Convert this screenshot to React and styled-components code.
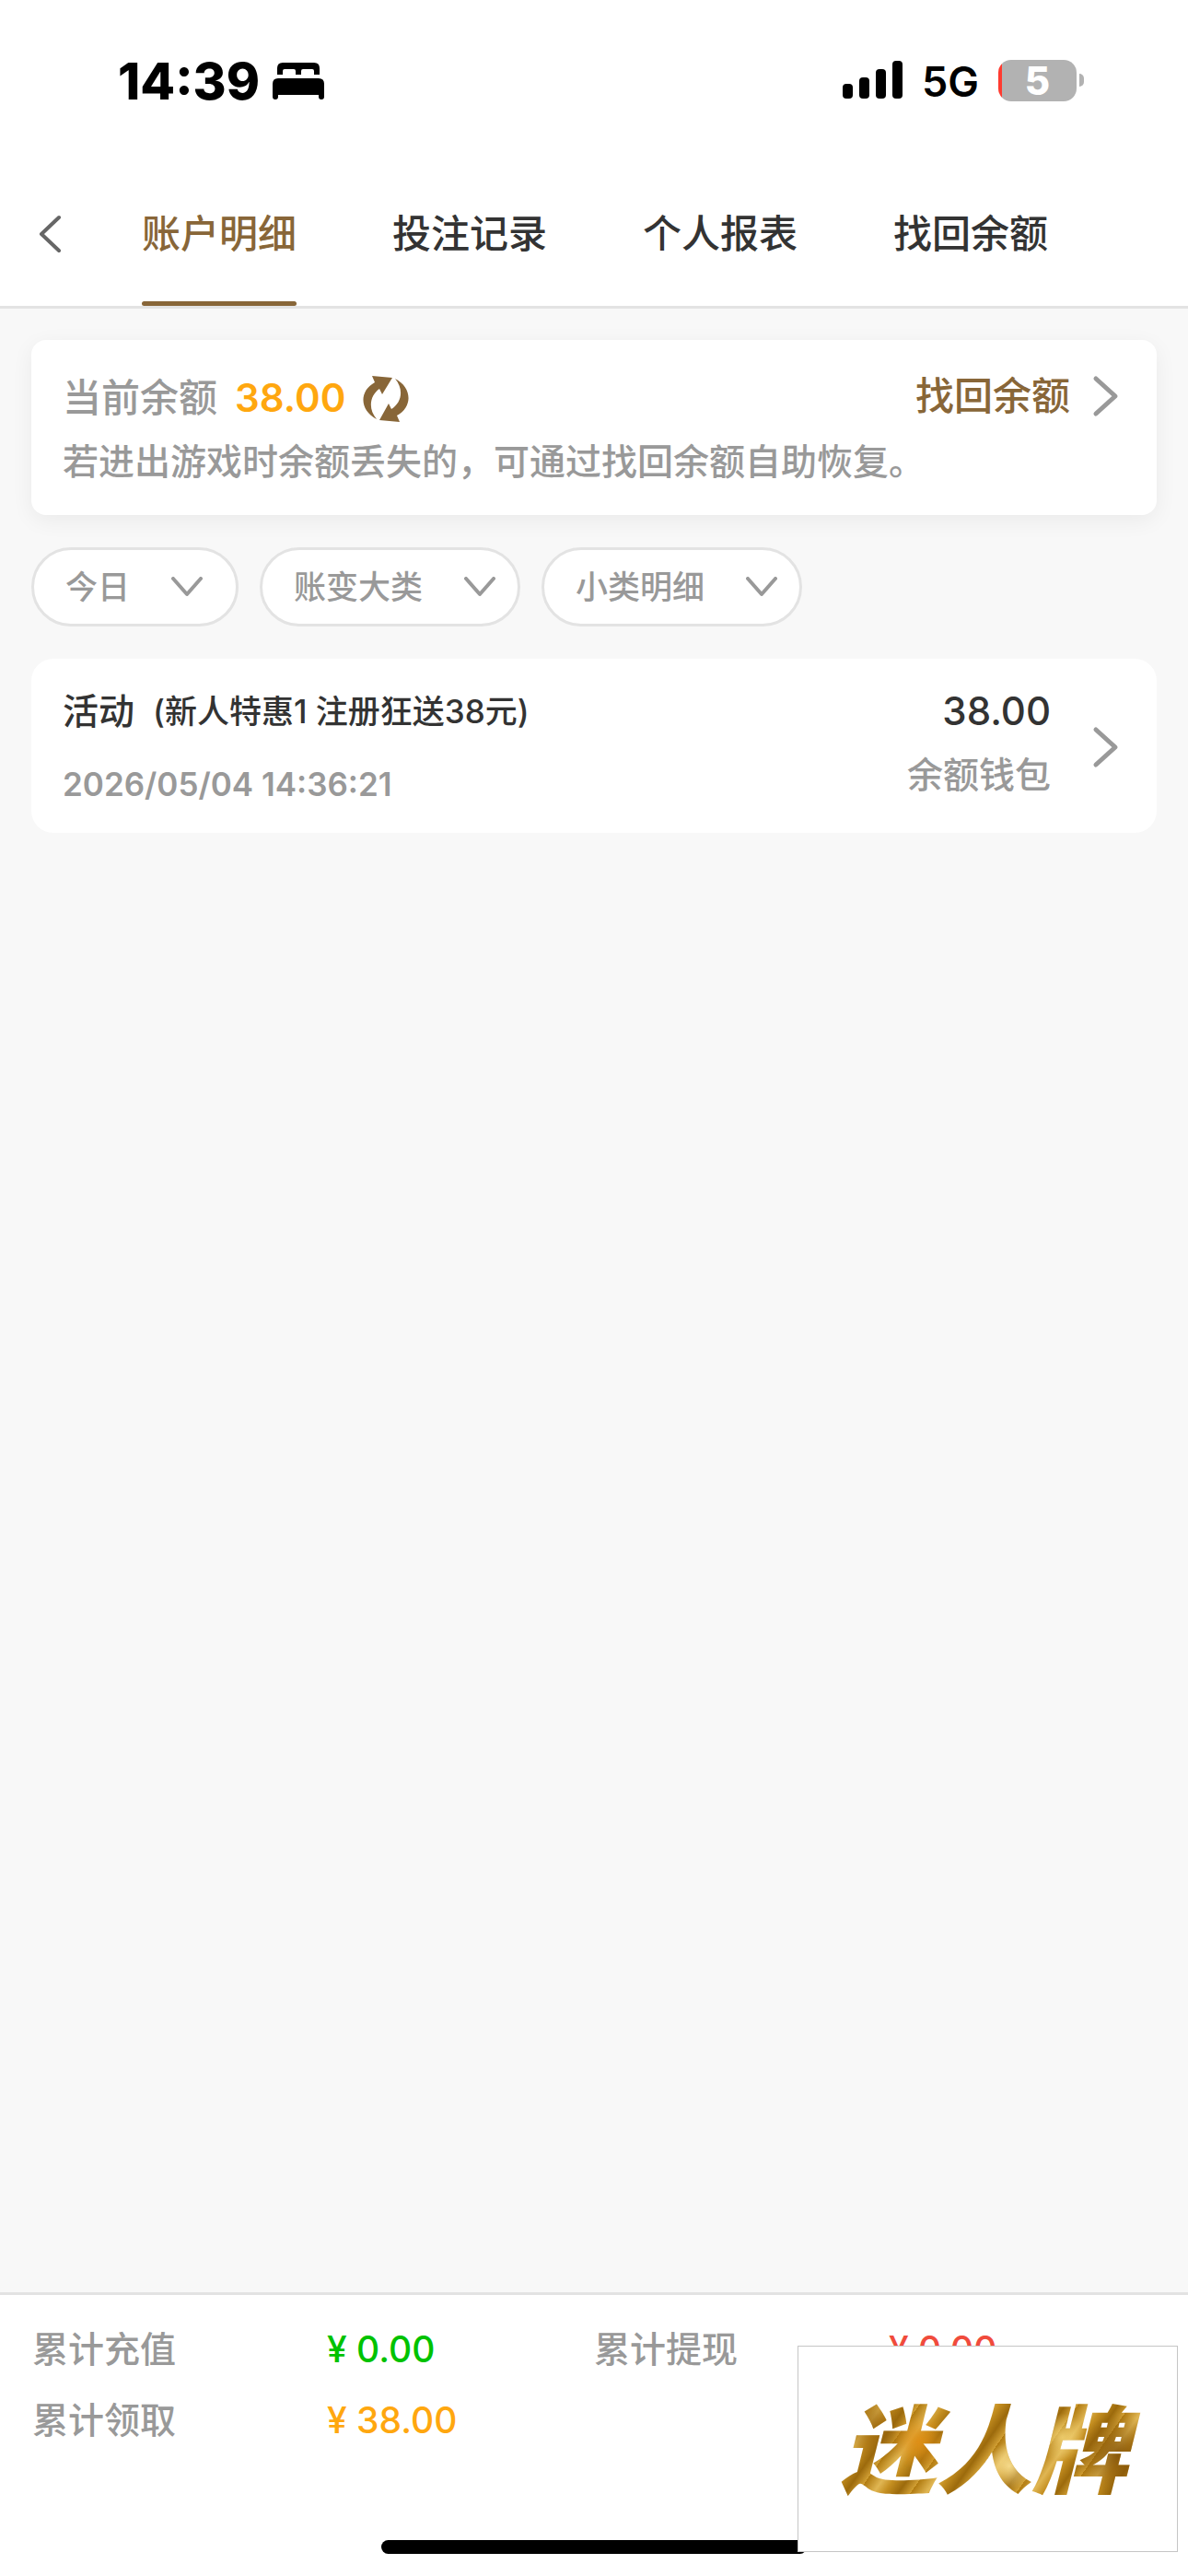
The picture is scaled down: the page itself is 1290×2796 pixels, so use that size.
import React from 'react'
import styled, { createGlobalStyle } from 'styled-components';

const tabs = ['账户明细', '投注记录', '个人报表', '找回余额'];

const totals = [
    { label: '累计充值', value: '¥ 0.00', color: '#00c200' },
    { label: '累计提现', value: '¥ 0.00', color: '#f04b3c' },
    { label: '累计领取', value: '¥ 38.00', color: '#ffa70f' },
];

const ArrowRight = () => (
    <ArrowSvg viewBox="0 0 40 48" aria-hidden="true">
        <path d="M10 5 L31 24 L10 43" />
    </ArrowSvg>
);

const Dropdown = ({ label, wide }) => (
    <Pill $wide={wide}>
        <Select aria-label={label} defaultValue={label}>
            <option>{label}</option>
        </Select>
        <PillArrow viewBox="0 0 34 22" aria-hidden="true">
            <path d="M2 2 L17 19 L32 2" />
        </PillArrow>
    </Pill>
);

export default function App() {
    return (
        <>
        <GlobalStyle />
        <Page>
            <StatusBar>
                <Clock>14:39</Clock>
                <Bed viewBox="0 0 56 40" aria-hidden="true">
                    <path d="M5 13V6Q5 0 11 0H45Q51 0 51 6V13H45V9Q45 7 43 7H33Q31 7 31 9V13H25V9Q25 7 23 7H13Q11 7 11 9V13Z" />
                    <path d="M0 23Q0 17 6 17H50Q56 17 56 23V37Q56 40 53 40T50 37V35H6V37Q6 40 3 40T0 37Z" />
                </Bed>
                <Spacer />
                <Signal viewBox="0 0 65 41" aria-hidden="true">
                    <rect x="0" y="25" width="11" height="16" rx="4" />
                    <rect x="18" y="18" width="11" height="23" rx="4" />
                    <rect x="36" y="9" width="11" height="32" rx="4" />
                    <rect x="54" y="0" width="11" height="41" rx="4" />
                </Signal>
                <Network>5G</Network>
                <Battery>
                    <BatteryBody>5</BatteryBody>
                    <BatteryCap />
                </Battery>
            </StatusBar>
            <Nav>
                <Back type="button" aria-label="返回">
                    <svg viewBox="0 0 28 44" width="28" height="44">
                        <path d="M24 4 L5 22 L24 40" />
                    </svg>
                </Back>
                <Tabs>
                    {tabs.map((tab, i) => (
                        <Tab key={tab} href="#" $active={i === 0}>
                            <span>{tab}</span>
                        </Tab>
                    ))}
                </Tabs>
            </Nav>
            <Main>
                <BalanceCard>
                    <BalanceRow>
                        <BalanceLabel>当前余额</BalanceLabel>
                        <Balance>38.00</Balance>
                        <Refresh type="button" aria-label="刷新">
                            <svg viewBox="0 0 50 52" width="50" height="52">
                                <path d="M10 1 L32 3 L21 21 L18 15 C8 22 5 36 15 48 C-3 39 -5 18 13 8 Z" />
                                <path d="M40 51 L18 49 L28 31 L31 37 C42 30 45 16 35 4 C53 13 55 34 37 44 Z" />
                            </svg>
                        </Refresh>
                        <Spacer />
                        <Recover href="#">
                            找回余额
                            <ArrowRight />
                        </Recover>
                    </BalanceRow>
                    <Hint>若进出游戏时余额丢失的，可通过找回余额自助恢复。</Hint>
                </BalanceCard>
                <Filters>
                    <Dropdown label="今日" wide />
                    <Dropdown label="账变大类" />
                    <Dropdown label="小类明细" />
                </Filters>
                <Record href="#">
                    <RecordInfo>
                        <RecordTitle>
                            活动
                            <small>(新人特惠1 注册狂送38元)</small>
                        </RecordTitle>
                        <RecordTime>2026/05/04 14:36:21</RecordTime>
                    </RecordInfo>
                    <RecordSum>
                        <RecordAmount>38.00</RecordAmount>
                        <RecordWallet>余额钱包</RecordWallet>
                    </RecordSum>
                    <ArrowRight />
                </Record>
            </Main>
            <Footer>
                <Totals>
                    {totals.map((item) => (
                        <Total key={item.label}>
                            <dt>{item.label}</dt>
                            <TotalValue $color={item.color}>{item.value}</TotalValue>
                        </Total>
                    ))}
                </Totals>
                <HomeIndicator />
                <Brand>
                    <BrandName>迷人牌</BrandName>
                </Brand>
            </Footer>
        </Page>
        </>
    );
};

const GlobalStyle = createGlobalStyle `
    * {
        box-sizing: border-box;
    }
    body {
        margin: 0;
        background: #f8f8f8;
        font-family: Inter, 'Noto Sans CJK SC', sans-serif;
        font-weight: 500;
    }
    a {
        color: inherit;
        text-decoration: none;
    }
    button, select {
        font: inherit;
        color: inherit;
        border: 0;
        padding: 0;
        background: none;
    }
`;
const Page = styled.div `
    display: flex;
    flex-direction: column;
    min-height: 100vh;
`;
const Spacer = styled.div `
    flex: 1;
`;
const StatusBar = styled.div `
    display: flex;
    align-items: center;
    height: 174px;
    padding: 2px 113px 0 128px;
    background: #fff;
    color: #000;
`;
const Clock = styled.span `
    font-size: 55px;
    font-weight: 800;
`;
const Bed = styled.svg `
    width: 56px;
    height: 40px;
    margin-left: 14px;
`;
const Signal = styled.svg `
    width: 65px;
    height: 41px;
    margin-bottom: 4px;
`;
const Network = styled.span `
    margin: 0 21px;
    font-size: 45px;
    font-weight: 600;
`;
const Battery = styled.div `
    display: flex;
    align-items: center;
    gap: 3px;
    margin-bottom: 2px;
`;
const BatteryBody = styled.div `
    width: 85px;
    height: 45px;
    border-radius: 14px;
    background: linear-gradient(to right, #ff3b30 4px, #b2b2b2 4px);
    color: #fff;
    font-size: 42px;
    font-weight: 800;
    line-height: 45px;
    text-align: center;
`;
const BatteryCap = styled.div `
    width: 5px;
    height: 14px;
    border-radius: 0 5px 5px 0;
    background: #b2b2b2;
`;
const Nav = styled.nav `
    display: flex;
    height: 161px;
    background: #fff;
    border-bottom: 3px solid #e3e3e3;
`;
const Back = styled.button `
    display: flex;
    align-items: center;
    width: 154px;
    padding: 2px 0 0 40px;
    svg {
        fill: none;
        stroke: #666;
        stroke-width: 4;
        stroke-linecap: round;
        stroke-linejoin: round;
    }
`;
const Tabs = styled.div `
    display: flex;
    gap: 104px;
`;
const Tab = styled.a `
    display: flex;
    flex-direction: column;
    font-size: 42px;
    color: ${(props) => (props.$active ? '#886638' : '#333')};
    span {
        display: flex;
        align-items: center;
        flex: 1;
    }
    &::after {
        content: '';
        height: 5px;
        border-radius: 3px;
        background: ${(props) => (props.$active ? '#886638' : 'transparent')};
    }
`;
const Main = styled.main `
    display: flex;
    flex-direction: column;
    gap: 35px;
    flex: 1;
    padding: 34px;
`;
const BalanceCard = styled.section `
    padding: 28px 36px 23px 34px;
    border-radius: 16px;
    background: #fff;
    box-shadow: 0 6px 24px rgba(0, 0, 0, 0.06);
    color: #999;
`;
const BalanceRow = styled.div `
    display: flex;
    align-items: center;
    height: 69px;
    font-size: 42px;
    line-height: 68px;
`;
const BalanceLabel = styled.span `
    margin-right: 19px;
`;
const Balance = styled.span `
    color: #ffa70f;
    font-weight: 600;
`;
const Refresh = styled.button `
    display: flex;
    margin: 2px 0 0 19px;
    fill: #886638;
`;
const Recover = styled.a `
    display: flex;
    align-items: center;
    gap: 18px;
    height: 66px;
    margin-bottom: 4px;
    color: #886638;
`;
const ArrowSvg = styled.svg `
    width: 40px;
    height: 48px;
    fill: none;
    stroke: #999;
    stroke-width: 5;
    stroke-linecap: round;
    stroke-linejoin: round;
`;
const Hint = styled.p `
    margin: 0;
    font-size: 39px;
    line-height: 70px;
`;
const Filters = styled.div `
    display: flex;
    gap: 23px;
`;
const Pill = styled.div `
    display: flex;
    align-items: center;
    gap: 44px;
    height: 86px;
    padding: 0 ${(props) => (props.$wide ? 36 : 24)}px 0 34px;
    border: 3px solid #e3e3e3;
    border-radius: 43px;
    background: #fff;
    color: #999;
    font-size: 35px;
`;
const Select = styled.select `
    appearance: none;
    height: 80px;
    outline: none;
`;
const PillArrow = styled.svg `
    width: 34px;
    height: 22px;
    fill: none;
    stroke: #999;
    stroke-width: 4;
    stroke-linecap: round;
    stroke-linejoin: round;
    pointer-events: none;
`;
const Record = styled.a `
    display: flex;
    align-items: center;
    padding: 22px 36px 20px 34px;
    border-radius: 24px;
    background: #fff;
    color: #333;
`;
const RecordInfo = styled.div `
    display: flex;
    flex-direction: column;
    gap: 13px;
    flex: 1;
    line-height: 66px;
`;
const RecordTitle = styled.div `
    display: flex;
    gap: 20px;
    padding-top: 2px;
    font-size: 39px;
    small {
        font-size: 35px;
    }
`;
const RecordTime = styled.time `
    color: #999;
    font-size: 35px;
    font-weight: 600;
`;
const RecordSum = styled.div `
    display: flex;
    flex-direction: column;
    gap: 3px;
    align-self: flex-start;
    margin-right: 39px;
    padding-top: 2px;
    line-height: 66px;
    text-align: right;
`;
const RecordAmount = styled.span `
    font-size: 42px;
`;
const RecordWallet = styled.span `
    color: #999;
    font-size: 39px;
`;
const Footer = styled.footer `
    position: relative;
    padding: 20px 35px 24px;
    border-top: 3px solid #e3e3e3;
    background: #fff;
`;
const Totals = styled.dl `
    display: grid;
    grid-template-columns: 1fr 1fr;
    margin: 0 0 92px;
    font-size: 39px;
    line-height: 77px;
`;
const Total = styled.div `
    display: flex;
    dt {
        width: 320px;
        color: #999;
    }
`;
const TotalValue = styled.dd `
    margin: 0;
    color: ${(props) => props.$color};
`;
const HomeIndicator = styled.div `
    width: 462px;
    height: 15px;
    margin: 0 auto;
    border-radius: 8px;
    background: #000;
`;
// floats over the totals in the corner
const Brand = styled.div `
    position: absolute;
    right: 11px;
    bottom: 26px;
    display: flex;
    align-items: center;
    justify-content: center;
    width: 413px;
    height: 224px;
    border: 1px solid #c6c6c6;
    background: #fff;
`;
const BrandName = styled.span `
    padding: 4px 16px 0 8px;
    font-size: 104px;
    font-weight: 900;
    font-style: italic;
    line-height: 150px;
    color: transparent;
    background:
        radial-gradient(circle at 28% 45%, rgba(224, 142, 20, 0.9), transparent 12%),
        radial-gradient(circle at 57% 62%, rgba(250, 226, 150, 0.9), transparent 12%),
        radial-gradient(circle at 92% 55%, rgba(130, 82, 8, 0.9), transparent 14%),
        radial-gradient(circle at 14% 36%, rgba(150, 98, 12, 0.8), transparent 12%),
        radial-gradient(circle at 74% 42%, rgba(244, 214, 120, 0.8), transparent 10%),
        repeating-linear-gradient(125deg, #b07a10 0, #e0b653 14px, #c48e20 24px, #9c6a0c 36px, #d19f34 47px);
    background-clip: text;
`;
